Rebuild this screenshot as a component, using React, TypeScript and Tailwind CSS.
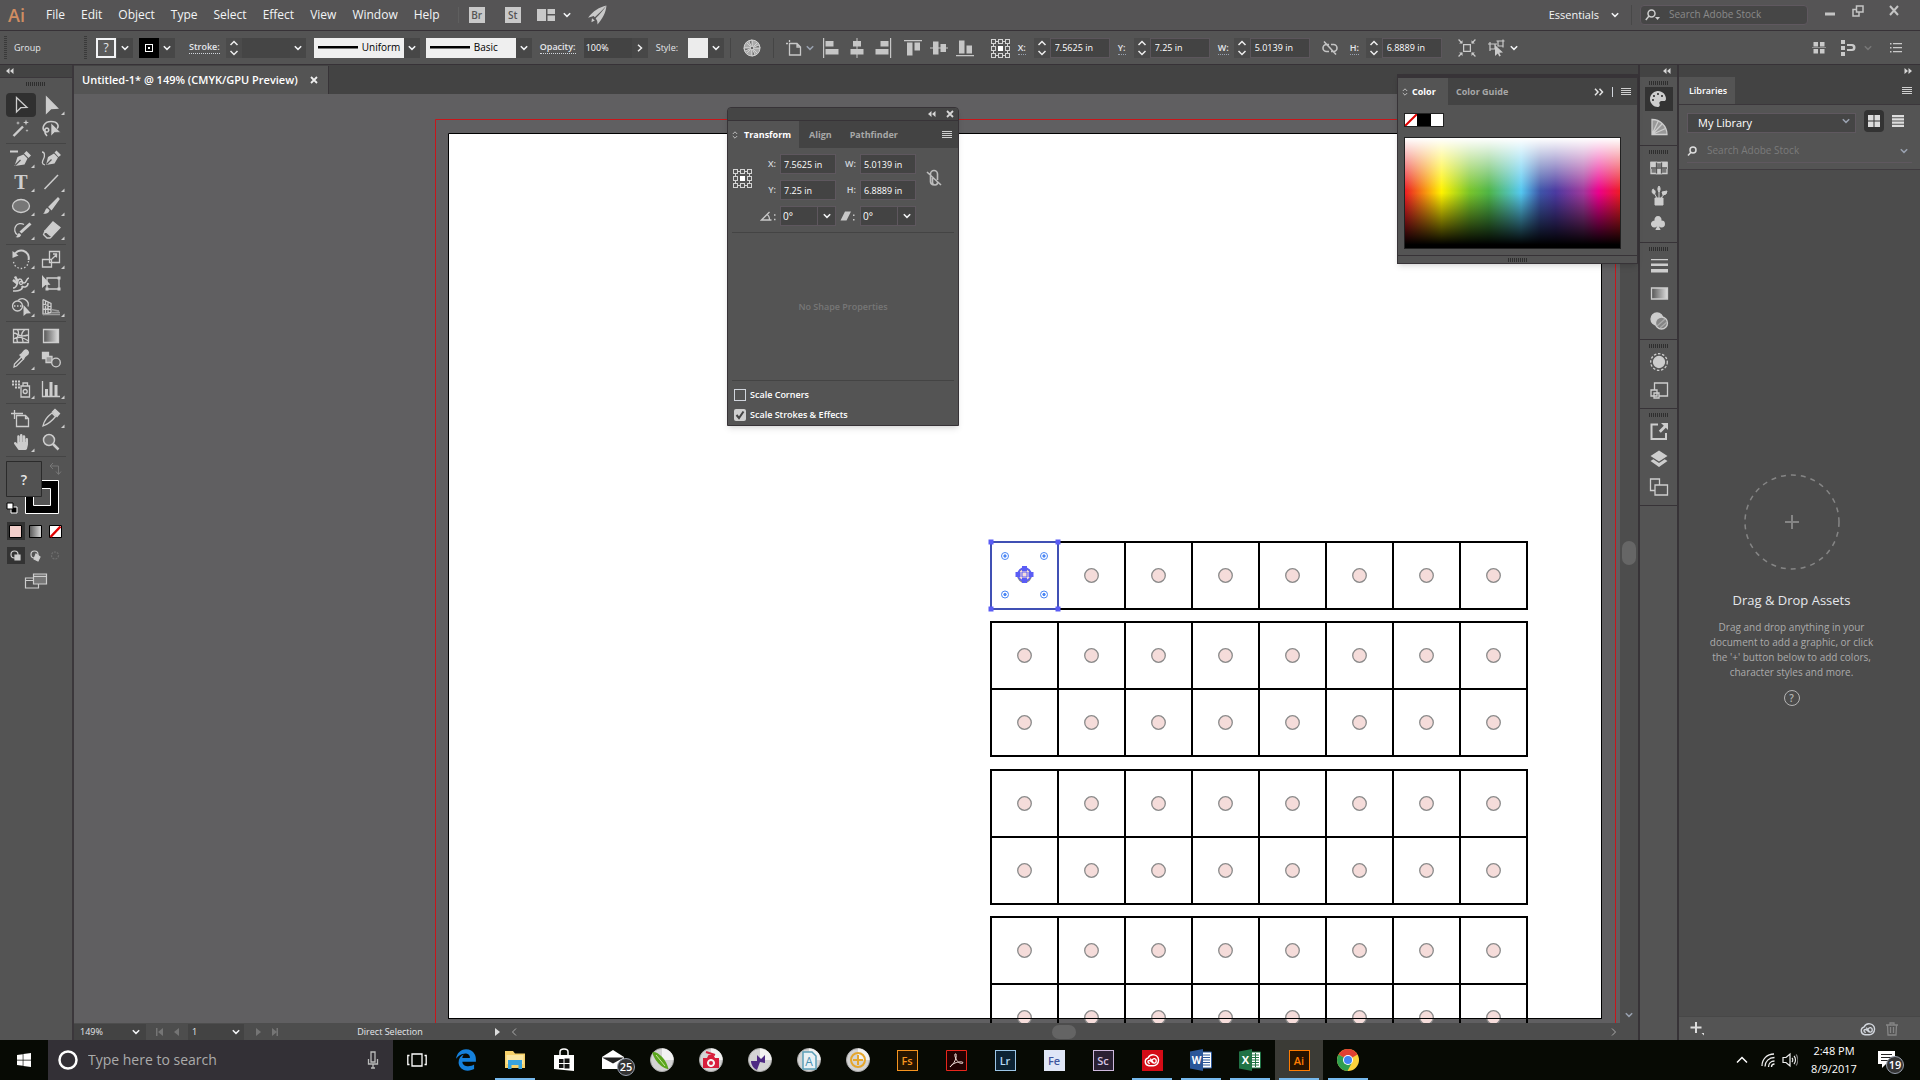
import * as React from 'react';
import { BsSuitClubFill } from 'react-icons/bs';
import { FaEdgeLegacy, FaHandPaper, FaPalette, FaWindows } from 'react-icons/fa';

const menus = ['File', 'Edit', 'Object', 'Type', 'Select', 'Effect', 'View', 'Window', 'Help'];

function Chevron({ className = 'text-gray-100' }: { className?: string }) {
  return (
    <svg className={`h-2 w-2 shrink-0 ${className}`} viewBox="0 0 8 8" fill="none" stroke="currentColor" strokeWidth="1.5">
      <path d="M0.8 2.2 4 5.4 7.2 2.2" />
    </svg>
  );
}

function Grip() {
  return (
    <svg className="h-1 w-5" viewBox="0 0 20 4" stroke="#2e2e2e">
      <path d="M.5 0v4M2.5 0v4M4.5 0v4M6.5 0v4M8.5 0v4M10.5 0v4M12.5 0v4M14.5 0v4M16.5 0v4M18.5 0v4" />
    </svg>
  );
}

function VGrip() {
  return (
    <svg className="h-6 w-1 shrink-0" viewBox="0 0 4 24" stroke="#3a3a3a">
      <path d="M0 .5h3M0 2.5h3M0 4.5h3M0 6.5h3M0 8.5h3M0 10.5h3M0 12.5h3M0 14.5h3M0 16.5h3M0 18.5h3M0 20.5h3M0 22.5h3" />
    </svg>
  );
}

function DoubleArrow({ right }: { right?: boolean }) {
  return (
    <svg className="h-2 w-2" viewBox="0 0 8 8" fill="#d6d6d6">
      <path d={right ? 'M.5 1v6L4 4zM4.5 1v6L8 4z' : 'M3.5 1v6L0 4zM7.5 1v6L4 4z'} />
    </svg>
  );
}

function MenuLines() {
  return (
    <svg className="h-2.5 w-2.5" viewBox="0 0 10 10" stroke="#cfcfcf">
      <path d="M0 1.5h10M0 3.5h10M0 5.5h10M0 7.5h10" />
    </svg>
  );
}

function DropButton({ label }: { label: string }) {
  return (
    <button aria-label={label} className="flex h-5 w-4 items-center justify-center bg-[#474747]">
      <Chevron />
    </button>
  );
}

function Stepper({ label }: { label: string }) {
  return (
    <button aria-label={label} className="flex h-5 w-4 items-center justify-center bg-[#4b4b4b]">
      <svg className="h-4 w-2.5" viewBox="0 0 10 16" fill="none" stroke="#eee" strokeWidth="1.5">
        <path d="M1.5 5 5 1.5 8.5 5M1.5 11 5 14.5 8.5 11" />
      </svg>
    </button>
  );
}

function RefPoint() {
  return (
    <svg className="h-5 w-5 shrink-0" viewBox="0 0 20 20" fill="none" stroke="#d4d4d4" shapeRendering="crispEdges">
      <path d="M1.5 1.5h4v4h-4zM8.5 1.5h4v4h-4zM15.5 1.5h4v4h-4zM1.5 8.5h4v4h-4zM15.5 8.5h4v4h-4zM1.5 15.5h4v4h-4zM8.5 15.5h4v4h-4zM15.5 15.5h4v4h-4zM5.5 3.5h3M12.5 3.5h3M5.5 17.5h3M12.5 17.5h3M3.5 5.5v3M3.5 12.5v3M17.5 5.5v3M17.5 12.5v3" />
      <path d="M8.5 8.5h4v4h-4z" fill="#fff" stroke="#fff" />
    </svg>
  );
}

function Measure({ id, label, value }: { id: string; label: string; value: string }) {
  return (
    <div className="flex items-center">
      <label htmlFor={id} className="w-4">
        <span className="border-b border-dotted border-gray-400">{label}:</span>
      </label>
      <Stepper label={`Step ${label}`} />
      <input id={id} defaultValue={value} className="h-5 w-15 border border-[#5c565c] bg-[#434343] px-1 font-normal text-white" />
    </div>
  );
}

function Sep() {
  return <span className="h-5 w-px shrink-0 bg-[#454545]" />;
}

function MenuBar() {
  return (
    <header className="flex h-[31px] shrink-0 items-center border-b border-[#373237] bg-[#555455] text-xs text-gray-100">
      <span className="w-9 pl-2 text-lg leading-none font-semibold text-[#d08d62]">Ai</span>
      <nav className="flex pl-0.5" aria-label="Main menu">
        {menus.map((item) => (
          <a key={item} href={`#${item}`} className="px-2">
            {item}
          </a>
        ))}
      </nav>
      <span className="mx-2.5 h-4 w-px bg-[#5f5f5f]" />
      <div className="flex items-center">
        <button className="h-4 w-4 bg-[#c9c9c9] text-[10px] leading-4 font-semibold text-[#555]">Br</button>
        <button className="ml-5 h-4 w-4 bg-[#c9c9c9] text-[10px] leading-4 font-semibold text-[#555]">St</button>
        <button aria-label="Arrange documents" className="ml-4 flex items-center gap-2">
          <svg className="h-3 w-[18px]" viewBox="0 0 18 12" fill="#c9c9c9">
            <path d="M0 0h9v12H0zM10.5 0H18v5h-7.5zM10.5 6.5H18V12h-7.5z" />
          </svg>
          <Chevron />
        </button>
        <button aria-label="GPU performance" className="ml-4">
          <svg className="h-5 w-5" viewBox="0 0 18 18" fill="#c9c9c9">
            <path d="M17.5 .5C11 2 5.5 5.500 1 11.500l5-1.500 1 1C10.500 8 14 4.500 17.500.5zM17.500.5C17 7 14 12.500 9.500 17.500L9.200 14.500 7.800 12C11.500 8.500 15 4.500 17.500.5zM4.500 12l2.500 2-3 1.500z" />
          </svg>
        </button>
      </div>
      <div className="ml-auto flex items-center">
        <button className="flex items-center gap-3 text-[11px]">
          Essentials <Chevron />
        </button>
        <span className="mr-2 ml-3 h-5 w-px bg-[#484848]" />
        <label className="flex h-5 w-42 items-center gap-2 rounded-sm border border-[#5f585f] bg-[#464646] pl-1">
          <svg className="h-3 w-4 shrink-0" viewBox="0 0 16 12" fill="none" stroke="#cfcfcf" strokeWidth="1.5">
            <circle cx="6.5" cy="4.5" r="3.5" />
            <path d="M4 7 .8 11" />
            <path d="M10 8h5l-2.500 3z" fill="#cfcfcf" stroke="none" />
          </svg>
          <input aria-label="Search Adobe Stock" placeholder="Search Adobe Stock" className="w-full text-[10px] outline-none placeholder:text-[#8a8a8a]" />
        </label>
        <div className="flex items-center gap-4 pr-5 pb-2 pl-4">
          <button aria-label="Minimize">
            <svg className="h-3 w-3" viewBox="0 0 12 12" stroke="#c4c4c4" strokeWidth="3">
              <path d="M1 9h10" />
            </svg>
          </button>
          <button aria-label="Restore">
            <svg className="h-3 w-3" viewBox="0 0 12 12" fill="none" stroke="#c4c4c4" strokeWidth="1.5">
              <path d="M4.5 1h6.500v6h-6.500zM4 4.500H1V11h6V7.500" />
            </svg>
          </button>
          <button aria-label="Close" className="ml-2">
            <svg className="h-3 w-3" viewBox="0 0 12 12" stroke="#c4c4c4" strokeWidth="2">
              <path d="m2 1 8 9M10 1 2 10" />
            </svg>
          </button>
        </div>
      </div>
    </header>
  );
}

const aligns: [string, string][][] = [
  [
    ['Align left', 'M1 0h1.200v20H1zM3.500 3h8v5.500h-8zM3.500 11h13v5.500h-13z'],
    ['Align centre', 'M8.500 0h1v20h-1zM5 3h8v5.500H5zM2.500 11h13v5.500h-13z'],
    ['Align right', 'M16 0h1.200v20H16zM6.500 3h8v5.500h-8zM1.500 11h13v5.500h-13z'],
  ],
  [
    ['Align top', 'M0 2h18v1.200H0zM3 4.500h5.500v13H3zM10.500 4.500H16v8h-5.500z'],
    ['Align middle', 'M0 9.500h18v1H0zM3 3.500h5.500v13H3zM10.500 6H16v8h-5.500z'],
    ['Align bottom', 'M0 17h18v1.200H0zM3 2.500h5.500v13H3zM10.500 7.500H16v8h-5.500z'],
  ],
];

function BrushSelect({ label }: { label: string }) {
  return (
    <div className="flex">
      <div className="relative">
        <select aria-label={label} className="h-5 w-[90px] appearance-none bg-[#efefef] pl-12 text-[10px] font-normal text-black">
          <option>{label}</option>
        </select>
        <svg className="pointer-events-none absolute top-2 left-1 h-1 w-10" viewBox="0 0 40 4">
          <path d="M0 0h40v2.500H0z" />
        </svg>
      </div>
      <DropButton label={`${label} options`} />
    </div>
  );
}

function ControlBar() {
  return (
    <div className="flex h-[34px] shrink-0 items-center border-b border-[#373237] bg-[#545454] pl-1 text-[9px] font-semibold text-gray-200">
      <VGrip />
      <span className="w-19 pl-1.5 font-normal">Group</span>
      <VGrip />
      <div className="ml-2 flex items-center gap-1.5">
        <div className="flex gap-px">
          <button aria-label="Fill" className="h-5 w-5 border-2 border-gray-100 bg-[#5a5a5a] text-xs leading-4 font-normal">
            ?
          </button>
          <DropButton label="Fill options" />
        </div>
        <div className="flex">
          <button aria-label="Stroke colour" className="flex h-5 w-5 items-center justify-center bg-black">
            <span className="h-2 w-2 border border-white bg-black p-0.5">
              <span className="block h-0.5 w-0.5 bg-white" />
            </span>
          </button>
          <DropButton label="Stroke options" />
        </div>
      </div>
      <label htmlFor="weight" className="mr-1.5 ml-3.5 border-b border-dotted border-gray-300 leading-3">
        Stroke:
      </label>
      <Stepper label="Stroke weight" />
      <input id="weight" className="h-5 w-12 bg-[#454545] px-1" />
      <DropButton label="Weight presets" />
      <div className="ml-2 flex gap-1.5">
        <BrushSelect label="Uniform" />
        <BrushSelect label="Basic" />
      </div>
      <label htmlFor="opacity" className="mx-2 w-9 border-b border-dotted border-gray-300 leading-3 whitespace-nowrap">
        Opacity:
      </label>
      <input id="opacity" defaultValue="100%" className="h-5 w-12 bg-[#434343] px-0.5 font-normal text-white" />
      <button aria-label="Opacity options" className="flex h-5 w-4 items-center justify-center bg-[#474747]">
        <svg className="h-2 w-2" viewBox="0 0 8 8" fill="none" stroke="#eee" strokeWidth="1.5">
          <path d="m2 .8 3.500 3.200L2 7.200" />
        </svg>
      </button>
      <span className="ml-2 w-8 font-normal">Style:</span>
      <button aria-label="Graphic style" className="h-5 w-5 bg-[#ececec]" />
      <DropButton label="Style options" />
      <div className="ml-1.5 flex items-center gap-3">
        <Sep />
        <button aria-label="Recolor artwork">
          <svg className="h-[18px] w-[18px]" viewBox="0 0 18 18" fill="#aaa" stroke="#d0d0d0">
            <circle cx="9" cy="9" r="8" />
            <path d="M9 1v16M1 9h16M3.500 3.500l11 11M14.500 3.500l-11 11" />
            <path d="M9 9 6 2.200 9 1zM9 9l6.800-3L17 9zM9 9l3 6.800L9 17zM9 9l-6.800 3L1 9z" fill="#6a6a6a" />
            <circle cx="9" cy="9" r="1.800" fill="#666" />
          </svg>
        </button>
        <Sep />
        <button aria-label="Crop" className="flex items-center gap-1">
          <svg className="h-4 w-4" viewBox="0 0 16 16" fill="none" stroke="#c8c8c8" strokeWidth="1.3">
            <path d="M3.500 0v2M0 3.500h2M3.500 3.500H11l3.500 3.500v8h-11zM11 3.500v3.500h3.500" />
          </svg>
          <Chevron className="text-gray-400" />
        </button>
      </div>
      <div className="ml-2 flex items-center gap-3">
        {aligns.map((set) => (
          <div key={set[0][0]} className="flex gap-2">
            {set.map(([label, d]) => (
              <button key={label} aria-label={label}>
                <svg className="h-5 w-[18px]" viewBox="0 0 18 20" fill="#c6c6c6">
                  <path d={d} />
                </svg>
              </button>
            ))}
          </div>
        ))}
      </div>
      <div className="ml-4 flex items-center gap-2">
        <RefPoint />
        <Measure id="bar-x" label="X" value="7.5625 in" />
        <Measure id="bar-y" label="Y" value="7.25 in" />
        <Measure id="bar-w" label="W" value="5.0139 in" />
        <button aria-label="Constrain proportions" className="px-1">
          <svg className="h-4 w-4" viewBox="0 0 16 16" fill="none" stroke="#c4c4c4" strokeWidth="1.6">
            <path d="M7 4.500H4.500a3.500 3.500 0 0 0 0 7H7M9 4.500h2.500a3.500 3.500 0 0 1 0 7H9M2 1.500l12 13" />
          </svg>
        </button>
        <Measure id="bar-h" label="H" value="6.8889 in" />
      </div>
      <div className="ml-4 flex items-center gap-3">
        <button aria-label="Isolate group">
          <svg className="h-[18px] w-[18px]" viewBox="0 0 16 16" fill="none" stroke="#cacaca" strokeWidth="1.1">
            <path d="M5 5h6v6H5zM.5.5l3 3M15.500.5l-3 3M.5 15.500l3-3M15.500 15.500l-3-3" />
            <path d="M4 1v3H1zM12 1v3h3zM4 15v-3H1zM12 15v-3h3z" fill="#cacaca" stroke="none" />
          </svg>
        </button>
        <button aria-label="Select similar" className="flex items-center gap-1">
          <svg className="h-[18px] w-[18px]" viewBox="0 0 18 18" fill="none" stroke="#cacaca" strokeWidth="1.2">
            <path d="M2 5h5v5H2zM10 2h5v5h-5zM0 5h9M2 3v9M8.500 2h8M15 .5v8" />
            <path d="M7 6v11l2.800-2.500 1.500 3 1.500-.8-1.500-3 3.700-.3z" fill="#cacaca" stroke="none" />
          </svg>
          <Chevron />
        </button>
      </div>
      <div className="ml-auto flex items-center gap-3.5 pr-4.5">
        <svg className="h-3.5 w-3.5" viewBox="0 0 14 14" fill="#cacaca">
          <path d="M1.500 1H6v4.500H1.500zM8 1h4.500v4.500H8zM1.500 8H6v4.500H1.500zM8 8h4.500v4.500H8zM0 6.500h14v.6H0z" />
        </svg>
        <div className="flex items-center gap-2">
          <svg className="h-4 w-4" viewBox="0 0 16 16" fill="#cacaca">
            <path d="M1 0h4v4H1zM1 6h4v4H1zM1 12h4v4H1zM7 4h5a3.500 3.500 0 0 1 0 7H7V9h4.500a1.500 1.500 0 0 0 0-3H7z" />
          </svg>
          <Chevron className="text-[#777]" />
        </div>
        <svg className="ml-1 h-3 w-3" viewBox="0 0 12 12" fill="#cacaca">
          <path d="M0 1h1.500v1.500H0zM3 1h9v1.300H3zM0 5h1.500v1.500H0zM3 5h9v1.300H3zM0 9h1.500v1.500H0zM3 9h9v1.300H3z" />
        </svg>
      </div>
    </div>
  );
}

// every tool glyph is drawn in a 30x24 cell centred on 15,12
type Tool = { name: string; art: React.ReactNode; flyout?: boolean; active?: boolean };

const F = '#cdcdcd';

const toolGroups: Tool[][] = [
  [
    { name: 'Selection', active: true, art: <path d="M10.500 4.500v14.500l4.300-4.300 6.200-.2z" /> },
    { name: 'Direct Selection', flyout: true, art: <path d="M10.500 4v16l4.500-4.500 6.500-.3z" fill={F} /> },
    {
      name: 'Magic Wand',
      art: (
        <>
          <path d="M7.500 19 17 9.500" strokeWidth="2.4" />
          <path d="m20 2.500.7 2.300 2.300.7-2.300.7L20 8.500l-.7-2.300-2.300-.7 2.300-.7zM12 4l.5 1.500L14 6l-1.500.5L12 8l-.5-1.500L10 6l1.500-.5zM21 12l.4 1.200 1.200.4-1.200.4-.4 1.200-.4-1.200-1.200-.4 1.200-.4z" fill={F} stroke="none" />
        </>
      ),
    },
    {
      name: 'Lasso',
      art: (
        <>
          <path d="M9 14.500c-4-3-1-10 6-10s9 5 5 8M9 14a2 2 0 1 0 2-3c-3 0-3 5 0 8" strokeWidth="1.6" />
          <path d="M15 6v13l3.500-3.500 6-.3z" fill={F} stroke="#555" strokeWidth=".6" />
        </>
      ),
    },
  ],
  [
    {
      name: 'Pen',
      flyout: true,
      art: (
        <>
          <path d="M4 5.500h8" strokeWidth="2" />
          <path d="m8.500 20 3-9 6-2.500 4 4-3 6z" fill={F} stroke="none" />
          <path d="m18 7.500 2.500-2.500 4.500 4.500-2.500 2.500z" fill={F} stroke="none" />
          <path d="m9 19.500 5.500-5.500" stroke="#555" />
        </>
      ),
    },
    {
      name: 'Curvature',
      art: (
        <>
          <path d="M6 6c3 0 3 4 1.500 7s-2 5 1.500 6" />
          <path d="m10 19 2-8 6-3.500 4 4-3.500 6zM18.500 6.500 20.500 4.500l4.500 4.500-2.500 2z" fill={F} stroke="none" />
          <path d="m10.500 18.500 5-5" stroke="#555" />
        </>
      ),
    },
    {
      name: 'Type',
      flyout: true,
      art: (
        <text x="15" y="18.5" textAnchor="middle" fontFamily="Liberation Serif, serif" fontSize="20" fontWeight="700" fill={F} stroke="none">
          T
        </text>
      ),
    },
    { name: 'Line Segment', flyout: true, art: <path d="M8.500 19 22 5" strokeWidth="1.5" /> },
    { name: 'Ellipse', flyout: true, art: <ellipse cx="15" cy="12" rx="8.5" ry="6.5" fill="#777" /> },
    {
      name: 'Paintbrush',
      flyout: true,
      art: (
        <>
          <path d="m13 13 9-9 1 1-7.500 10.500z" fill={F} />
          <path d="M7 19.500c2 0 1.500-4 4-5.500l2.500 2c0 3-4 4.500-6.500 3.500z" fill={F} stroke="none" />
        </>
      ),
    },
    {
      name: 'Blob Brush',
      flyout: true,
      art: (
        <>
          <path d="M18 6.500a6 6 0 1 0-6.500 10.300" />
          <path d="m14.500 14.500 10-9" strokeWidth="3" />
          <path d="M9.500 19c2 0 1.500-3 3.500-4l2.200 2c-1 2.500-3.700 3-5.700 2z" fill={F} stroke="none" />
        </>
      ),
    },
    {
      name: 'Eraser',
      flyout: true,
      art: (
        <>
          <path d="m9 13 8-9 7 5.500-8.500 9z" fill={F} />
          <path d="m9 13 6.500 5.500-1.500 1.500H11l-3.500-3.500z" fill="#555" />
        </>
      ),
    },
  ],
  [
    {
      name: 'Rotate',
      flyout: true,
      art: (
        <>
          <path d="M8 9a7.500 7.500 0 0 1 14.500 4" strokeWidth="2" />
          <path d="M22.500 14a7.500 7.500 0 0 1-15 0" strokeDasharray="1.5 2" />
          <path d="M6.500 4v7l6-2.500z" fill={F} stroke="none" />
        </>
      ),
    },
    {
      name: 'Scale',
      flyout: true,
      art: (
        <>
          <path d="M13.500 4.500h10v11h-10zM6.500 12.500h9v7.500h-9z" />
          <path d="m16 12 5-5M20.500 10.500V7H17" />
        </>
      ),
    },
    {
      name: 'Width',
      flyout: true,
      art: (
        <>
          <path d="M7 17c6 0 3-9 7-9 3 0 1 4 4 4s2-5 5-5M7 20c8 0 10-2 9-5 2 2 6 1 6-3" strokeWidth="1.6" />
          <path d="M9 5.500 11.500 10M7 9l5 4" strokeWidth="2.5" />
          <circle cx="15" cy="12" r="1.5" />
        </>
      ),
    },
    {
      name: 'Free Transform',
      art: (
        <>
          <path d="M11 7h12v11H11z" />
          <path d="M21.500 5.500h3v3h-3zM9.500 16.500h3v3h-3zM21.500 16.500h3v3h-3z" fill={F} stroke="none" />
          <path d="M6 4v13l3.500-3 5-.3z" fill={F} stroke="none" />
        </>
      ),
    },
    {
      name: 'Shape Builder',
      flyout: true,
      art: (
        <>
          <circle cx="11.5" cy="11" r="5" />
          <path d="M12 5.500a6 6 0 0 1 10 6" />
          <path d="M8 11h9" strokeDasharray="1.5 1.5" />
          <path d="M17.500 10v11l3-2.500 4.500-.3z" fill={F} stroke="none" />
        </>
      ),
    },
    {
      name: 'Perspective Grid',
      flyout: true,
      art: (
        <>
          <path d="M7 4.500v15M7 4.500l8 4v9M9.500 6v12.500M12 7.300V18M7 9l8 2.500M7 14l8 .5M7 19.500 15 17.500" />
          <path d="M7 19.500h17M15 17.500h9M15 14.500l8 1.500" stroke="#999" />
        </>
      ),
    },
  ],
  [
    {
      name: 'Mesh',
      art: <path d="M7.500 5.500h15v13h-15zM7.500 9c5 0 4 5 15 2M11 5.500c5 4-3 8 1 13M19 5.500c-6 5-2 8-2 13M7.500 15c5-3 9-2 15 2" />,
    },
    {
      name: 'Gradient',
      art: <path d="M7.500 5.500h15v13h-15z" fill="url(#fade)" />,
    },
    {
      name: 'Eyedropper',
      flyout: true,
      art: (
        <>
          <path d="m8 19 .5-3 7-7 2 2-7 7z" />
          <path d="m14 7 2-1.500 2.500-3c2-1.500 5 1 3.500 3.500l-3 2.500L17.500 11z" fill={F} />
        </>
      ),
    },
    {
      name: 'Blend',
      art: (
        <>
          <path d="M6.500 4.500h6v6h-6z" fill={F} />
          <path d="M10 8.500h6v6h-6z" fill="#999" />
          <circle cx="20" cy="14.5" r="4.3" fill="#5a5a5a" />
        </>
      ),
    },
  ],
  [
    {
      name: 'Symbol Sprayer',
      flyout: true,
      art: (
        <>
          <path d="M15 9h8.500v11H15zM17 6h4.500v3H17z" />
          <circle cx="19.2" cy="14.5" r="2" />
          <path d="M6 4.500h2M9 4.500h2M12 4.500h2M6 7.500h2M9 7.500h2M12 7.500h2M9 10.500h2M12 10.500h2" strokeWidth="1.8" />
        </>
      ),
    },
    {
      name: 'Column Graph',
      flyout: true,
      art: (
        <>
          <path d="M6.500 4v15.500H24" />
          <path d="M9 12h3v7H9zM13.500 5h3v14h-3zM18.500 8h3v11h-3z" fill={F} stroke="none" />
        </>
      ),
    },
  ],
  [
    {
      name: 'Artboard',
      art: <path d="M10.500 9.500h9l3 3v8h-12zM19.500 9.500v3h3M5 7.500h12M8.500 4v9" />,
    },
    {
      name: 'Slice',
      flyout: true,
      art: (
        <>
          <path d="M7 20c1-5 5-10 9-13l3.500 3.500C16 15 11 18.500 7 20z" />
          <path d="m16.500 6 2.500-2.500 4.500 4L21 10.500z" fill={F} />
        </>
      ),
    },
    { name: 'Hand', flyout: true, art: <FaHandPaper x="7" y="4" width="16" height="16" color={F} stroke="none" /> },
    {
      name: 'Zoom',
      art: (
        <>
          <circle cx="13" cy="10" r="5.5" fill="#6d6d6d" strokeWidth="1.5" />
          <path d="m17 14 5.500 5.500" strokeWidth="2.5" />
        </>
      ),
    },
  ],
];

function ToolPanel() {
  return (
    <aside className="flex w-[74px] shrink-0 flex-col border-r-2 border-[#3b373b] bg-[#545454]">
      <div className="flex h-3 items-center bg-[#434343] pl-1.5">
        <DoubleArrow />
      </div>
      <div className="flex h-4 justify-center border-t border-[#3b373b] pt-1">
        <Grip />
      </div>
      <div className="px-1.5">
        {toolGroups.map((group) => (
          <div key={group[0].name} className="mb-0.5 grid grid-cols-2 border-b border-[#454545] pb-0.5">
            {group.map((tool) => (
              <button
                key={tool.name}
                aria-label={tool.name}
                className={`h-6 w-[30px] ${tool.active ? 'rounded-sm bg-[#303030]' : ''}`}
              >
                <svg className="h-6 w-[30px]" viewBox="0 0 30 24" fill="none" stroke={F} strokeWidth="1.3">
                  {tool.art}
                  {tool.flyout && <path d="M28.500 18.500V22h-3.500z" fill={F} stroke="none" />}
                </svg>
              </button>
            ))}
          </div>
        ))}
      </div>
      <svg className="h-36 w-[72px]" viewBox="0 459 72 144" fill="none">
        <defs>
          <linearGradient id="fade">
            <stop offset="0" stopColor="#555" />
            <stop offset="1" stopColor="#ddd" />
          </linearGradient>
        </defs>
        <path d="M51 466h7.500v8M53 463l-3 3 3 3M56 471.500l2.500 3 2.500-3" stroke="#777" />
        <path d="M25.500 480.500h33v33h-33z" fill="#000" stroke="#fff" />
        <path d="M33.500 488.500h17v17h-17z" fill="#545454" stroke="#fff" />
        <path d="M6.500 461.500h35v35h-35z" fill="#525252" stroke="#2b2b2b" />
        <text x="24" y="485" textAnchor="middle" fontFamily="Open Sans, sans-serif" fontSize="14" fontWeight="600" fill="#e8e8e8">
          ?
        </text>
        <path d="M11 507h6v6h-6z" fill="#000" stroke="#fff" />
        <path d="M7 503h6v6H7z" fill="#fff" stroke="#000" />
        <path d="M7 522h18v18H7z" fill="#333" />
        <path d="M9.500 525.500h12v12h-12z" fill="#f2cfcb" stroke="#000" />
        <path d="M29.500 525.500h12v12h-12z" fill="url(#fade)" stroke="#000" />
        <path d="M49.500 525.500h12v12h-12z" fill="#fff" stroke="#000" />
        <path d="m50.500 537 10-10.500" stroke="#e00000" strokeWidth="2.5" />
        <path d="M7 547h18v17H7z" fill="#333" />
        <g stroke="#cdcdcd" strokeWidth="1.2">
          <circle cx="14.5" cy="554.5" r="3.5" />
          <path d="M15 555h5v5h-5z" fill="#cdcdcd" />
          <circle cx="34.5" cy="554.5" r="3.5" />
          <path d="m36 554 4 3-2 4-4-2z" fill="#cdcdcd" />
          <circle cx="55" cy="555.5" r="3.5" stroke="#6e6e6e" strokeDasharray="2 1" />
          <path d="M25.500 578h13v10h-13zM25.500 580.500h13" fill="#545454" />
          <path d="M33.500 574h13v10h-13zM33.500 576.500h13" fill="#777" />
        </g>
      </svg>
    </aside>
  );
}

const columns = [991, 1058, 1125, 1192, 1259, 1326, 1393, 1460];
const rows = [542, 622, 689, 770, 837, 917, 984];
const handles = [
  [991, 542],
  [1058, 542],
  [991, 609],
  [1058, 609],
];

function Artwork() {
  return (
    <svg className="block h-full w-full" aria-label="Artboard">
      <g transform="translate(-74 -94)" fill="none">
        <path d="M435.500 1200V119.500h1180V1200" stroke="#c8161a" />
        <path d="M448.500 133.500h1153v885h-1153z" fill="#fff" stroke="#000" />
        {rows.map((y) =>
          columns.map((x) => (
            <g key={`${x}-${y}`}>
              <path d={`M${x} ${y}h67v67h-67z`} stroke="#000" strokeWidth="2" />
              <circle cx={x + 33.5} cy={y + 33.5} r="6.8" fill="#f5dcda" stroke="#8a8a8a" strokeWidth="1.3" />
            </g>
          )),
        )}
        <path d="M448 1018.500h1154" stroke="#000" />
        <path d="M991 542h67v67h-67z" stroke="#4050b4" strokeWidth="2" />
        {handles.map(([x, y]) => (
          <path key={`${x}-${y}`} d={`M${x - 2.5} ${y - 2.5}h5v5h-5z`} fill="#5a5cf5" />
        ))}
        <g stroke="#4a86f5">
          {[1005, 1044].map((x) =>
            [556, 594.5].map((y) => (
              <g key={`${x}-${y}`}>
                <circle cx={x} cy={y} r="3.5" />
                <circle cx={x} cy={y} r="1.2" fill="#4a86f5" />
              </g>
            )),
          )}
        </g>
        <circle cx="1024.5" cy="574.5" r="6.5" stroke="#5a5cf5" strokeWidth="1.5" />
        <path d="M1022 566h5v5h-5zM1022 578h5v5h-5zM1015.500 572h5v5h-5zM1028.500 572h5v5h-5z" fill="#5a5cf5" />
        <path d="M1022 572h5v5h-5z" stroke="#5a5cf5" />
      </g>
    </svg>
  );
}

function PanelField({ id, value }: { id: string; value: string }) {
  return <input id={id} defaultValue={value} className="h-5 w-14 border border-[#5e575e] bg-[#434343] px-[3px] font-normal text-white" />;
}

function AngleField({ id }: { id: string }) {
  return (
    <div className="flex h-5 w-14 border border-[#5e575e] bg-[#434343]">
      <input id={id} defaultValue="0°" className="w-9 min-w-0 px-0.5 text-[10px] font-normal text-white" />
      <button aria-label={`${id} presets`} className="flex w-[18px] items-center justify-center border-l border-[#5e575e]">
        <Chevron />
      </button>
    </div>
  );
}

function TabCaret() {
  return (
    <svg className="h-2 w-1.5" viewBox="0 0 6 8" fill="none" stroke="#bbb">
      <path d="M.8 3 3 .8 5.200 3M.8 5 3 7.200 5.200 5" />
    </svg>
  );
}

function TransformPanel() {
  return (
    <section className="absolute top-[13px] left-[653px] w-[232px] rounded-t border border-[#373337] bg-[#545454] text-[9px] font-semibold text-gray-300 shadow-md">
      <div className="flex h-3 items-center justify-end gap-2.5 rounded-t bg-[#454545] pr-1">
        <DoubleArrow />
        <button aria-label="Close panel">
          <svg className="h-2 w-2" viewBox="0 0 8 8" stroke="#d6d6d6" strokeWidth="1.8">
            <path d="m1 1 6 6M7 1 1 7" />
          </svg>
        </button>
      </div>
      <div className="flex h-7 items-stretch border-t border-[#373337] bg-[#434343] text-[#a8a8a8]">
        <button className="flex w-[71px] items-center gap-1.5 bg-[#545454] pl-1 font-bold text-white">
          <TabCaret /> Transform
        </button>
        <button className="px-2.5 font-bold">Align</button>
        <button className="px-2 font-bold">Pathfinder</button>
        <span className="mr-1.5 ml-auto self-center">
          <MenuLines />
        </span>
      </div>
      <div className="flex items-start px-1 pt-1.5">
        <div className="mt-3.5 w-7">
          <RefPoint />
        </div>
        <div className="grid grid-cols-[auto_auto_auto_auto] items-center gap-x-1 gap-y-1.5 text-right">
          <label htmlFor="panel-x">X:</label>
          <PanelField id="panel-x" value="7.5625 in" />
          <label htmlFor="panel-w">W:</label>
          <PanelField id="panel-w" value="5.0139 in" />
          <label htmlFor="panel-y">Y:</label>
          <PanelField id="panel-y" value="7.25 in" />
          <label htmlFor="panel-h">H:</label>
          <PanelField id="panel-h" value="6.8889 in" />
          <label htmlFor="rotate" aria-label="Rotate" className="flex justify-end">
            <svg className="h-2.5 w-4 shrink-0" viewBox="0 0 16 10" fill="none" stroke="#c8c8c8" strokeWidth="1.3">
              <path d="M9.500 1 1.500 9h10M7 3.500c2 1 2.500 3 2.500 5.500" />
              <path d="M14 4h1.500M14 8.500h1.500" />
            </svg>
          </label>
          <AngleField id="rotate" />
          <label htmlFor="shear" aria-label="Shear" className="flex justify-end">
            <svg className="h-2.5 w-4" viewBox="0 0 16 10" fill="#c8c8c8">
              <path d="M5 .5h6L6.500 9.500h-6zM13 3.500h1.500V5H13zM13 8h1.500v1.500H13z" />
            </svg>
          </label>
          <AngleField id="shear" />
        </div>
        <button aria-label="Constrain width and height" className="mt-3.5 ml-2">
          <svg className="h-5 w-5" viewBox="0 0 20 20" fill="none" stroke="#bdbdbd" strokeWidth="1.6">
            <path d="M6.500 7V6a3.500 3.500 0 0 1 7 0v6M8.500 8.500v6a2.500 2.500 0 0 0 5 0M3 4l14 13M6.500 7v7a3.500 3.500 0 0 0 3 3" />
          </svg>
        </button>
      </div>
      <div className="mx-1 mt-1.5 flex h-[149px] items-center justify-center border-y border-[#444] text-[#777]">No Shape Properties</div>
      <div className="flex flex-col gap-1 px-1.5 pt-1.5 pb-0.5 text-white">
        <label className="flex h-4 items-center gap-1">
          <input type="checkbox" className="h-3 w-3 appearance-none border border-gray-300 bg-transparent" />
          Scale Corners
        </label>
        <label className="flex h-4 items-center gap-1">
          <span className="relative flex">
            <input type="checkbox" defaultChecked className="h-3 w-3 appearance-none rounded-xs bg-[#cfcfcf]" />
            <svg className="pointer-events-none absolute inset-0 h-3 w-3" viewBox="0 0 12 12" fill="none" stroke="#444" strokeWidth="2">
              <path d="m2.500 6 2.500 3 4.500-6.500" />
            </svg>
          </span>
          Scale Strokes &amp; Effects
        </label>
      </div>
    </section>
  );
}

function ColorPanel() {
  return (
    <section className="absolute -top-5 right-0 w-[241px] border border-t-4 border-[#373337] bg-[#545454] text-[9px] shadow-md">
      <div className="flex h-[27px] items-stretch bg-[#434343] font-bold text-[#a8a8a8]">
        <button className="flex w-[50px] items-center gap-1 bg-[#545454] pl-1 text-white">
          <TabCaret /> Color
        </button>
        <button className="px-2">Color Guide</button>
        <div className="ml-auto flex items-center gap-2 pr-1.5">
          <svg className="h-2 w-2.5" viewBox="0 0 10 8" fill="none" stroke="#e4e4e4" strokeWidth="1.5">
            <path d="m1 .8 3 3.200-3 3.200M5.500.8l3 3.200-3 3.200" />
          </svg>
          <span className="h-2.5 w-px bg-gray-300" />
          <MenuLines />
        </div>
      </div>
      <div className="p-1.5 pt-2">
        <div className="flex w-10 border border-[#222]">
          <button aria-label="None" className="w-3">
            <svg className="h-3 w-3 bg-white" viewBox="0 0 12 12" stroke="#e00000" strokeWidth="2">
              <path d="M0 12 12 0" />
            </svg>
          </button>
          <button aria-label="Black" className="h-3 w-3.5 bg-black" />
          <button aria-label="White" className="h-3 w-3 bg-white" />
        </div>
        <div className="mt-2.5 mr-2.5 h-28 border border-[#222] bg-[linear-gradient(to_bottom,#fff_0%,transparent_48%,transparent_50%,#000_97%),linear-gradient(to_right,#ec1c24_0%,#fff200_17%,#7ac52a_30%,#4fb548_39%,#55c8f0_54%,#3e55a8_63%,#4b3aa0_70%,#a0399b_83%,#ec008c_90%,#ed1c24_100%)]" />
      </div>
      <div className="flex h-2 items-center justify-center border-t border-[#373337]">
        <Grip />
      </div>
    </section>
  );
}

function StatusBar() {
  return (
    <div className="flex h-[17px] shrink-0 items-center bg-[#4d4d4d] text-[9px] text-gray-200">
      <input aria-label="Zoom level" defaultValue="149%" className="h-4 w-13 bg-[#434343] pl-1.5" />
      <button aria-label="Zoom presets" className="flex h-4 w-5 items-center justify-center bg-[#434343]">
        <Chevron />
      </button>
      <svg className="mx-2 h-2 w-[26px]" viewBox="0 0 26 8" fill="#757575">
        <path d="M2 0h1.500v8H2zM9 0v8L4 4zM25 0v8l-5-4z" />
      </svg>
      <input aria-label="Artboard number" defaultValue="1" className="h-4 w-10 bg-[#434343] pl-1" />
      <button aria-label="Artboard list" className="flex h-4 w-4 items-center justify-center bg-[#434343]">
        <Chevron />
      </button>
      <svg className="mx-2 h-2 w-[26px]" viewBox="0 0 26 8" fill="#757575">
        <path d="M4 0v8l5-4zM20 0v8l5-4zM24.500 0H26v8h-1.500z" />
      </svg>
      <span className="w-52 text-center">Direct Selection</span>
      <svg className="h-2 w-2" viewBox="0 0 8 8" fill="#ddd">
        <path d="M1 0v8l5-4z" />
      </svg>
      <div className="ml-2 flex flex-1 items-center justify-between pr-5">
        <svg className="h-2 w-2" viewBox="0 0 8 8" fill="none" stroke="#aaa">
          <path d="M6 .5 2.500 4 6 7.500" />
        </svg>
        <span className="h-3.5 w-6 rounded-full bg-[#646464]" />
        <svg className="h-2 w-2" viewBox="0 0 8 8" fill="none" stroke="#aaa">
          <path d="M2 .5 5.500 4 2 7.500" />
        </svg>
      </div>
    </div>
  );
}

function Workspace() {
  return (
    <main className="flex min-w-0 flex-1 flex-col">
      <div className="flex h-[29px] shrink-0 items-end bg-[#434343]">
        <div className="flex h-7 items-center gap-3 border-r border-[#373337] bg-[#545454] pr-2.5 pl-2 text-[11px] font-semibold text-white">
          Untitled-1* @ 149% (CMYK/GPU Preview)
          <button aria-label="Close document">
            <svg className="h-2 w-2" viewBox="0 0 8 8" stroke="#eee" strokeWidth="1.8">
              <path d="m1 1 6 6M7 1 1 7" />
            </svg>
          </button>
        </div>
      </div>
      <div className="relative flex min-h-0 flex-1">
        <div className="min-w-0 flex-1 overflow-hidden bg-[#605f61]">
          <Artwork />
        </div>
        <div className="flex w-[18px] shrink-0 flex-col items-center bg-[#4d4d4d]">
          <span className="flex-1" />
          <span className="h-6 w-3.5 rounded-full bg-[#666]" />
          <span className="flex-1" />
          <Chevron className="mb-1 text-gray-400" />
        </div>
        <TransformPanel />
        <ColorPanel />
      </div>
      <StatusBar />
    </main>
  );
}

// dock glyphs share a 20x20 box
const dockGroups: { name: string; art: React.ReactNode; active?: boolean }[][] = [
  [
    { name: 'Color', active: true, art: <FaPalette x="1" y="2" width="18" height="16" color={F} stroke="none" /> },
    { name: 'Color Guide', art: <path d="M3 2.500v15h15C18 9 11 2.500 3 2.500zM3 17.500 13 7M3 17.500l6-13M3 17.500l13.500-6" fill="#999" /> },
  ],
  [
    {
      name: 'Swatches',
      art: (
        <>
          <path d="M2 4.500h16v11H2z" fill="#777" />
          <path d="M2 4.500h5.500v5.500H2zM12.500 4.500H18V10h-5.500zM7.500 10h5v5.500h-5z" fill={F} />
          <path d="M2 10h16M7.500 4.500v11M12.500 4.500v11" stroke="#555" />
        </>
      ),
    },
    {
      name: 'Brushes',
      art: <path d="M6 12h8v7H6zM8 12 4.500 6M10 12V5M12 12l4-5M4 3c2 1 3 3 1.500 5C3 8 2.500 5 4 3zM10 0c1.500 2 1.500 4 0 6-1.500-2-1.500-4 0-6zM13 6l5-1-1 3-3 1z" fill={F} strokeWidth="1" />,
    },
    { name: 'Symbols', art: <BsSuitClubFill x="1" y="1" width="18" height="18" color={F} stroke="none" /> },
  ],
  [
    { name: 'Stroke', art: <path d="M2 4h17v1.300H2zM2 8.500h17v2.500H2zM2 14h17v3.500H2z" fill={F} stroke="none" /> },
    { name: 'Gradient', art: <path d="M2.500 5h16v11h-16z" fill="url(#fade)" /> },
    {
      name: 'Transparency',
      art: (
        <>
          <circle cx="8" cy="8" r="6" fill={F} />
          <circle cx="12.5" cy="12" r="6" fill="#858585" />
          <path d="m8 15 8-7M11 17l7-6" stroke="#aaa" />
        </>
      ),
    },
  ],
  [
    {
      name: 'Appearance',
      art: (
        <>
          <circle cx="10" cy="10" r="5.5" fill={F} />
          <circle cx="10" cy="10" r="8.3" strokeDasharray="2.5 1.7" />
        </>
      ),
    },
    { name: 'Graphic Styles', art: <path d="M5.500 10V3h13v13h-8M2 10h6v6H2zM5 13h5v5H5z" /> },
  ],
  [
    {
      name: 'Asset Export',
      art: (
        <>
          <path d="M9 3.500H2.500V18H17v-6" strokeWidth="2" />
          <path d="M12 2h7v7l-2.200-2.200-5 5-2-2 5-5z" fill={F} stroke="none" />
        </>
      ),
    },
    {
      name: 'Layers',
      art: <path d="m10 1.500 8.500 5.500L10 12.500 1.500 7zM1.500 12l2.800-1.800L10 14l5.700-3.800L18.500 12 10 18z" fill={F} stroke="none" />,
    },
    { name: 'Artboards', art: <path d="M6 13.500H1.500V2h9v5.500M6 8h12.500v10H6z" /> },
  ],
];

function IconDock() {
  return (
    <aside className="flex w-[41px] shrink-0 flex-col border-x-2 border-[#373337] bg-[#545454]">
      <div className="flex h-3 items-center justify-end bg-[#434343] pr-1.5">
        <DoubleArrow />
      </div>
      {dockGroups.map((group) => (
        <div key={group[0].name} className="flex flex-col items-center border-b border-[#373337] pb-1">
          <div className="flex h-2 items-end">
            <Grip />
          </div>
          {group.map((item) => (
            <button
              key={item.name}
              aria-label={item.name}
              className={`my-0.5 flex h-6 w-7 items-center justify-center ${item.active ? 'bg-[#333]' : ''}`}
            >
              <svg className="h-5 w-5" viewBox="0 0 20 20" fill="none" stroke={F} strokeWidth="1.3">
                {item.art}
              </svg>
            </button>
          ))}
        </div>
      ))}
    </aside>
  );
}

function CloudMark({ className }: { className: string }) {
  return (
    <svg className={className} viewBox="0 0 18 16" fill="none" stroke="currentColor" strokeWidth="1.6">
      <path d="M5.500 14.500a4.500 4.500 0 0 1-1-8.800A6.300 6.300 0 0 1 16.500 8c0 4-3 6.500-6 6.500z" />
      <path d="M6.500 12C3.500 11.500 4 8.500 6 8.500c2.500 0 3 3.500 6 3 2.500-.5 2.500-4.500 0-5-2-.3-3 1.500-3 2.500M11 11.500 7 6.500" />
    </svg>
  );
}

function Libraries() {
  return (
    <aside className="flex w-[241px] shrink-0 flex-col bg-[#4c4c4c]">
      <div className="flex h-3 items-center justify-end bg-[#434343] pr-2">
        <DoubleArrow right />
      </div>
      <div className="flex h-7 items-center justify-between border-b border-[#3b373b] bg-[#434343] pr-2">
        <button className="h-full w-14 bg-[#545454] pl-0.5 text-[9px] font-semibold text-white">Libraries</button>
        <MenuLines />
      </div>
      <div className="border-b border-[#3f3b3f] bg-[#545454] px-2 pt-1 pb-1.5">
        <div className="flex items-center gap-2">
          <div className="relative flex-1">
            <select aria-label="Library" className="h-5 w-full appearance-none border border-[#5f585f] bg-[#454545] pl-2.5 text-[11px] text-white">
              <option>My Library</option>
            </select>
            <span className="pointer-events-none absolute inset-y-0 right-1.5 flex items-center">
              <Chevron className="text-gray-400" />
            </span>
          </div>
          <button aria-label="Grid view" className="flex h-[22px] w-5 items-center justify-center rounded-sm bg-[#333]">
            <svg className="h-3 w-3" viewBox="0 0 12 12" fill="#ddd">
              <path d="M0 0h5.500v5.500H0zM6.500 0H12v5.500H6.500zM0 6.500h5.500V12H0zM6.500 6.500H12V12H6.500z" />
            </svg>
          </button>
          <button aria-label="List view" className="flex h-5 w-5 items-center">
            <svg className="h-3 w-3" viewBox="0 0 12 12" fill="#ddd">
              <path d="M0 0h12v2.200H0zM0 3.300h12v2.200H0zM0 6.500h12v2.200H0zM0 9.800h12V12H0z" />
            </svg>
          </button>
        </div>
        <label className="mt-1.5 flex h-6 items-center gap-2.5 border-b border-[#5f585f] pr-1">
          <svg className="h-2.5 w-2.5 shrink-0" viewBox="0 0 10 10" fill="none" stroke="#ddd" strokeWidth="1.5">
            <circle cx="6" cy="4" r="3" />
            <path d="M4 6.200 1 9.500" />
          </svg>
          <input aria-label="Search library" placeholder="Search Adobe Stock" className="w-full text-[10px] outline-none placeholder:text-[#7b7b7b]" />
          <Chevron className="text-gray-400" />
        </label>
      </div>
      <div className="flex flex-1 flex-col items-center pt-76 pr-7 pl-3 text-center">
        <svg className="h-24 w-24" viewBox="0 0 96 96" fill="none" stroke="#858585" strokeWidth="1.5">
          <circle cx="48" cy="48" r="47" strokeDasharray="5 5" />
          <path d="M48 41v14M41 48h14" strokeWidth="2" />
        </svg>
        <h2 className="mt-5 text-[13px] leading-5 text-gray-200">Drag &amp; Drop Assets</h2>
        <p className="mt-2.5 w-44 text-[10px] leading-[15px] text-[#ababab]">
          Drag and drop anything in your document to add a graphic, or click the &apos;+&apos; button below to add colors, character styles and more.
        </p>
        <button className="mt-2.5 h-4 w-4 rounded-full border border-[#b5b5b5] text-[10px] leading-3.5 font-semibold text-[#b5b5b5]">?</button>
      </div>
      <div className="flex h-6 items-center border-t border-[#474747] bg-[#545454] px-2.5 text-gray-300">
        <button aria-label="Add content">
          <svg className="h-4 w-4" viewBox="0 0 16 16" fill="#ddd">
            <path d="M6 1h2v4.500h4.500v2H8V12H6V7.500H1.500v-2H6zM12.500 12H15v2.500z" />
          </svg>
        </button>
        <CloudMark className="mr-2.5 ml-auto h-3.5 w-4" />
        <button aria-label="Delete" className="mr-3">
          <svg className="h-3.5 w-3" viewBox="0 0 12 14" fill="none" stroke="#858585" strokeWidth="1.3">
            <path d="M0 3h12M4 3V1h4v2M1.500 3l.5 10h8l.5-10M4.500 5v6M7.500 5v6" />
          </svg>
        </button>
      </div>
    </aside>
  );
}

function Disc({ children }: { children: React.ReactNode }) {
  return (
    <svg className="h-6 w-6" viewBox="0 0 24 24" fill="none">
      <circle cx="12" cy="12" r="11.5" fill="#d4d4d4" stroke="#aaa" />
      <path d="M12 .5A11.500 11.500 0 0 1 23.500 12L12 12z" fill="#f2f2f2" />
      {children}
    </svg>
  );
}

function AppTile({ label, className }: { label: string; className: string }) {
  return <span className={`flex h-[21px] w-[21px] items-center justify-center border text-[11px] leading-none font-semibold ${className}`}>{label}</span>;
}

const apps: { name: string; icon: React.ReactNode; open?: boolean; active?: boolean }[] = [
  {
    name: 'Task View',
    icon: (
      <svg className="h-4 w-5" viewBox="0 0 20 16" fill="none" stroke="#fff" strokeWidth="1.3">
        <path d="M5 2h10v12H5zM2.500 3.500H.8v9h1.700M17.500 3.500h1.700v9h-1.700" />
      </svg>
    ),
  },
  { name: 'Edge', icon: <FaEdgeLegacy className="h-[22px] w-[22px] text-[#1581dc]" /> },
  {
    name: 'File Explorer',
    open: true,
    icon: (
      <svg className="h-5 w-5.5" viewBox="0 0 22 20">
        <path d="M1 1h8l2 2.500h10V18H1z" fill="#f7d26b" />
        <path d="M2.500 5h17v9h-17z" fill="#fbe7a3" />
        <path d="M4 10h14v9h-3.500v-4h-7v4H4z" fill="#38a3e0" />
      </svg>
    ),
  },
  {
    name: 'Store',
    icon: (
      <svg className="h-6 w-5.5" viewBox="0 0 22 24" fill="none">
        <path d="M1 7h20v16L1 21z" fill="#fff" />
        <path d="M7 7V4c0-4 8-4 8 0v3" stroke="#fff" strokeWidth="1.5" />
        <path d="M6 11h4.500v4H6zM11.500 10.500h5V15h-5zM6 16h4.500v4H6zM11.500 16h5v4.500h-5z" fill="#111" />
      </svg>
    ),
  },
  {
    name: 'Mail',
    icon: (
      <span className="relative">
        <svg className="h-5 w-6" viewBox="0 0 24 20" fill="#fff">
          <path d="M12 0 23 7v12H1V7z" />
          <path d="m1 7.500 11 6 11-6" fill="#222" />
        </svg>
        <span className="absolute top-2 left-4 flex h-[18px] w-[18px] items-center justify-center rounded-full border border-gray-400 bg-[#333] text-[11px] font-semibold text-white">25</span>
      </span>
    ),
  },
  { name: 'CorelDRAW', icon: <Disc><path d="M2.500 4c5-1 14 7 16 17C12 21 3 11 2.500 4z" fill="#5aa51d" /><path d="m6 7 9 11" stroke="#c7e89d" /></Disc> },
  { name: 'Corel Capture', icon: <Disc><path d="M4 10h4l1.500-3h5l1.500 3h4v10H4z" fill="#d81e3b" /><circle cx="12" cy="15" r="3.5" fill="#eee" stroke="#fff" /><circle cx="12" cy="15" r="2" fill="#d81e3b" /><path d="m7 4 9 3" stroke="#d81e3b" strokeWidth="2" /></Disc> },
  { name: 'Corel Connect', icon: <Disc><path d="M3 13h6V7l4 4 4-4v8l-5-1-3 8c-3-1-6-5-6-9z" fill="#4e2a84" /></Disc> },
  { name: 'Corel Font Manager', icon: <Disc><path d="M6 4h9l4 4v13H6z" fill="#e9f1f5" stroke="#5b9fb8" strokeWidth="1.5" /><text x="12" y="18" textAnchor="middle" fontSize="12" fontFamily="Open Sans, sans-serif" fill="#4990b0">A</text></Disc> },
  { name: 'Corel PHOTO-PAINT', icon: <Disc><circle cx="12" cy="12" r="7" stroke="#e5a62c" strokeWidth="2" /><path d="M12 7v10M7 12h10" stroke="#e5a62c" strokeWidth="2" /></Disc> },
  { name: 'Fuse', icon: <AppTile label="Fs" className="border-[#f5941f] bg-[#261500] text-[#f5941f]" /> },
  {
    name: 'Acrobat',
    icon: (
      <svg className="h-[21px] w-[21px]" viewBox="0 0 21 21" fill="none">
        <path d="M.5.5h20v20H.5z" fill="#200" stroke="#e8261c" />
        <path d="M4 17c4-3 7-9 6-13-1-1-2 1 0 5 2 4 5 5 7 4 0-2-5-1-8 0-2 1-4 2-5 4z" stroke="#f3ded9" />
      </svg>
    ),
  },
  { name: 'Lightroom', icon: <AppTile label="Lr" className="border-[#9bc5e6] bg-[#0c2233] text-[#b5d8f2]" /> },
  { name: 'Fe', icon: <AppTile label="Fe" className="border-[#e1e7f5] bg-[#dfe6f7] text-[#3f579f]" /> },
  { name: 'Scout', icon: <AppTile label="Sc" className="border-[#cdb8dd] bg-[#2a2033] text-[#d6c5e3]" /> },
  {
    name: 'Creative Cloud',
    open: true,
    icon: (
      <span className="flex h-[21px] w-[21px] items-center justify-center bg-[#d40b16] text-white">
        <CloudMark className="h-3.5 w-4" />
      </span>
    ),
  },
  {
    name: 'Word',
    open: true,
    icon: (
      <svg className="h-[22px] w-[22px]" viewBox="0 0 22 22">
        <path d="M11 3h10.500v16H11z" fill="#fff" stroke="#2a5699" />
        <path d="M13 6h7M13 8.500h7M13 11h7M13 13.500h7M13 16h7" stroke="#2a5699" />
        <path d="M0 2.500 13 0v22L0 19.500z" fill="#2a5699" />
        <text x="6.5" y="15" textAnchor="middle" fontSize="10" fontWeight="700" fontFamily="Open Sans, sans-serif" fill="#fff">W</text>
      </svg>
    ),
  },
  {
    name: 'Excel',
    open: true,
    icon: (
      <svg className="h-[22px] w-[22px]" viewBox="0 0 22 22">
        <path d="M11 3h10.500v16H11z" fill="#fff" stroke="#207245" />
        <path d="M13 6h7M13 8.500h7M13 11h7M13 13.500h7M13 16h7M16.500 4v14" stroke="#207245" />
        <path d="M0 2.500 13 0v22L0 19.500z" fill="#207245" />
        <text x="6.5" y="15" textAnchor="middle" fontSize="11" fontWeight="700" fontFamily="Open Sans, sans-serif" fill="#fff">X</text>
      </svg>
    ),
  },
  { name: 'Illustrator', open: true, active: true, icon: <AppTile label="Ai" className="border-[#ff7c00] bg-[#261300] text-[#ff7c00]" /> },
  {
    name: 'Chrome',
    open: true,
    icon: (
      <svg className="h-[22px] w-[22px]" viewBox="0 0 22 22">
        <circle cx="11" cy="11" r="11" fill="#fdd23c" />
        <path d="M11 11 1.500 5.500a11 11 0 0 1 19 0z" fill="#e04033" />
        <path d="M1.500 5.500A11 11 0 0 0 10.500 22L15 13.500 11 11z" fill="#2f9e4f" />
        <circle cx="11" cy="11" r="5" fill="#fff" />
        <circle cx="11" cy="11" r="4" fill="#4284f3" />
      </svg>
    ),
  },
];

function Taskbar() {
  return (
    <footer className="flex h-10 shrink-0 items-stretch bg-[#070a04] text-white">
      <button aria-label="Start" className="flex w-12 items-center justify-center">
        <FaWindows className="h-4 w-4" />
      </button>
      <label className="flex w-[345px] items-center gap-2.5 bg-[#333036] px-2.5">
        <svg className="h-5 w-5 shrink-0" viewBox="0 0 20 20" fill="none" stroke="#fff" strokeWidth="2.5">
          <circle cx="10" cy="10" r="8.5" />
        </svg>
        <input aria-label="Search Windows" placeholder="Type here to search" className="w-full text-sm outline-none placeholder:text-[#ababab]" />
        <svg className="mr-1 h-[18px] w-3 shrink-0" viewBox="0 0 12 18" fill="none" stroke="#bbb" strokeWidth="1.3">
          <path d="M4 1h4v10H4zM1.500 8v5h9V8M6 13v4M4 17h4" />
        </svg>
      </label>
      <div className="flex gap-px">
        {apps.map((app) => (
          <button
            key={app.name}
            aria-label={app.name}
            className={`flex w-12 items-center justify-center ${app.active ? 'bg-[#3b3b36]' : ''}`}
          >
            <span className={`flex h-10 w-10 items-center justify-center border-y-2 border-t-transparent ${app.open ? 'border-b-[#76b9ed]' : 'border-b-transparent'}`}>{app.icon}</span>
          </button>
        ))}
      </div>
      <div className="ml-auto flex items-center pr-6">
        <svg className="h-3 w-3" viewBox="0 0 12 12" fill="none" stroke="#fff" strokeWidth="1.5">
          <path d="m1 8.500 5-5 5 5" />
        </svg>
        <svg className="ml-3 h-4 w-4" viewBox="0 0 16 16" fill="none" stroke="#eee" strokeWidth="1.3">
          <path d="M2 14C2 7 7 2 14 2M5 14.500c0-5 4-9 9.500-9M8.500 15c0-3.500 2.500-6 6-6M11.500 15c0-2 1-3 3-3" />
        </svg>
        <svg className="ml-1.5 h-4 w-4" viewBox="0 0 16 16" fill="none" stroke="#eee" strokeWidth="1.2">
          <path d="M1 5.500h3L8 2v12l-4-3.500H1zM10 6c1 1 1 3 0 4M12 4c2 2 2 6 0 8" />
          <path d="M14 2.500c2.500 3 2.500 8 0 11" stroke="#777" />
        </svg>
        <div className="ml-1 w-16 text-center text-[11px] leading-[18px]">
          <div>2:48 PM</div>
          <div>8/9/2017</div>
        </div>
        <button aria-label="Notifications" className="relative ml-3">
          <svg className="h-5 w-4.5" viewBox="0 0 18 20" fill="#fff">
            <path d="M0 1h17v13H8l-4 4v-4H0z" />
            <path d="M3 4.500h11M3 7.500h11M3 10.500h11" stroke="#222" />
          </svg>
          <span className="absolute top-1.5 left-2 flex h-[18px] w-[18px] items-center justify-center rounded-full border border-gray-400 bg-[#333] text-[11px] font-semibold">19</span>
        </button>
      </div>
    </footer>
  );
}

export default function App() {
  return (
    <div className="flex h-screen flex-col overflow-hidden bg-[#545454] font-['Open_Sans','Noto_Sans',sans-serif]">
      <MenuBar />
      <ControlBar />
      <div className="flex min-h-0 flex-1">
        <ToolPanel />
        <Workspace />
        <IconDock />
        <Libraries />
      </div>
      <Taskbar />
    </div>
  );
}
